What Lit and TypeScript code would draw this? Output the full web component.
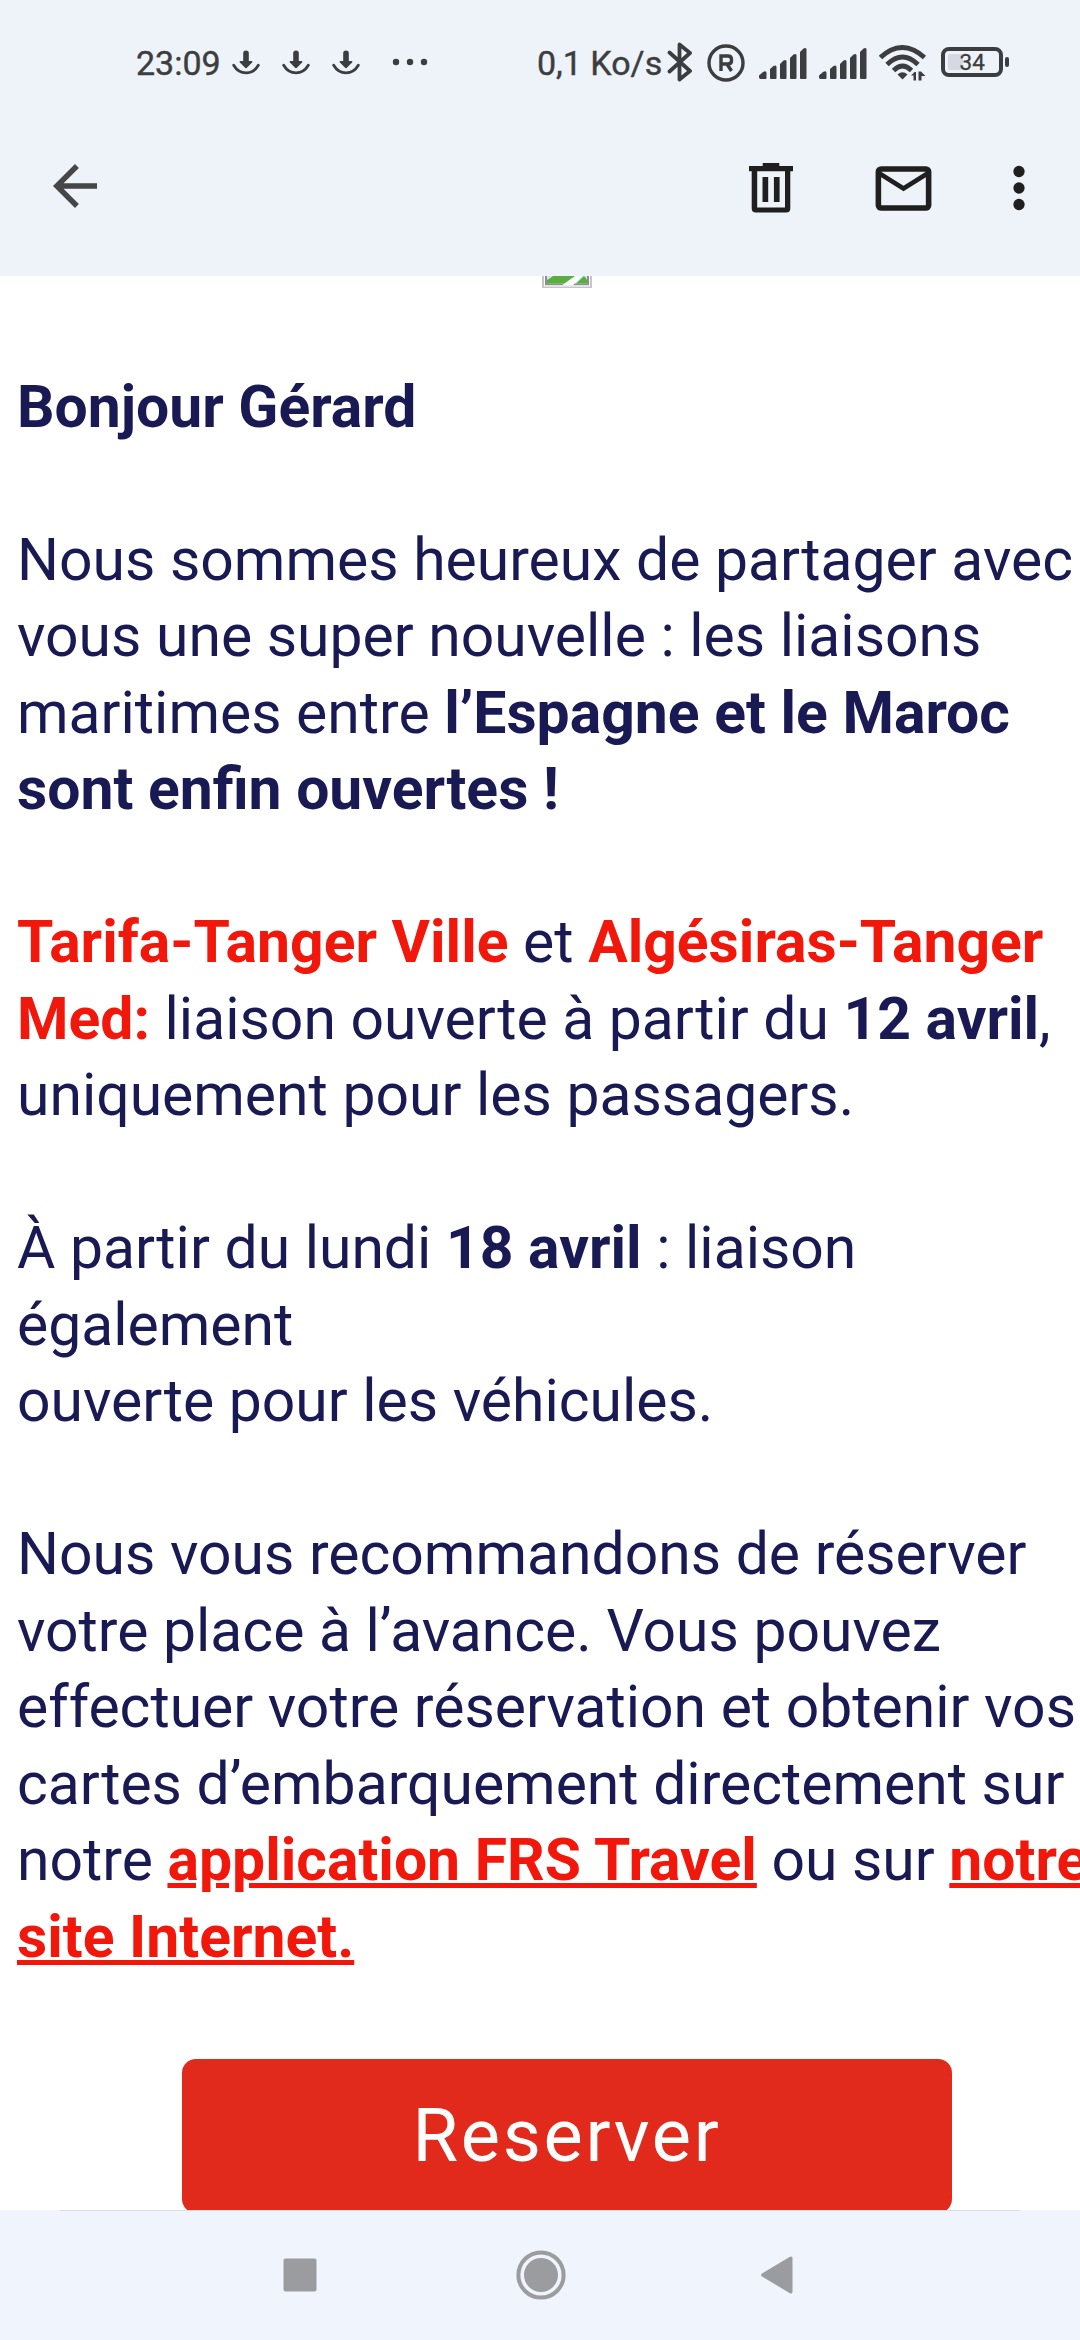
import { LitElement, html, css } from "lit";
import { customElement } from "lit/decorators.js";

const download = html`<svg class="dl" width="28" height="26" viewBox="0 0 28 26">
  <path d="M11.2 3.2a2.8 2.8 0 0 1 5.6 0V11h2.6c1 0 1.4.9.7 1.6l-5.200 5.100c-.6.600-1.200.600-1.800 0L7.900 12.600c-.7-.7-.3-1.600.7-1.600h2.600z" fill="#3c3d3f"/>
  <path d="M1.700 15.300C5 21 8.500 22.900 14 22.900S23 21 26.300 15.300" fill="none" stroke="#3c3d3f" stroke-width="2.800" stroke-linecap="round"/>
</svg>`;

const signal = html`<svg class="signal" width="48" height="32" viewBox="0 0 48 32" fill="#3c3d3f">
  <path d="M0 28.500 4 25q3.500-2 3.500 1v5a1 1 0 0 1-1 1H1.500Q0 32 0 30z"/>
  <path d="M11 22l3.500-3q3-1.500 3 1v11a1 1 0 0 1-1 1H12a1 1 0 0 1-1-1z"/>
  <path d="M21 17l3.500-3.500q3-1.500 3 1V31a1 1 0 0 1-1 1H22a1 1 0 0 1-1-1z"/>
  <path d="M31 11l3.500-3.500q3-1.500 3 1V31a1 1 0 0 1-1 1H32a1 1 0 0 1-1-1z"/>
  <path d="M41 5l3.500-3.500q3-1.500 3 1V31a1 1 0 0 1-1 1H42a1 1 0 0 1-1-1z"/>
</svg>`;

@customElement("app-root")
export class AppRoot extends LitElement {
  static styles = css`
    :host {
      display: flex;
      flex-direction: column;
      width: 1080px;
      height: 2340px;
      overflow: hidden;
      background: #fff;
      font-family: Roboto, "Liberation Sans", sans-serif;
    }
    svg { display: block; flex: none; }
    .status {
      display: flex;
      align-items: center;
      height: 126px;
      padding-left: 136px;
      box-sizing: border-box;
      background: #eef3fa;
      color: #3c3d3f;
      font-size: 34px;
      flex: none;
    }
    .time, .rate { white-space: nowrap; -webkit-text-stroke: 0.4px #3c3d3f; }
    .time { width: 96px; }
    .downloads { display: flex; gap: 22px; }
    .dots { margin: 0 0 2px 32px; }
    .rate { margin-left: 109px; width: 123px; }
    .bt { margin: 0 0 2px 7px; }
    .reg { margin: 0 0 1px 14px; }
    .sim { display: flex; gap: 12px; margin: 0 0 1px 14px; }
    .wifi { margin-left: 12px; }
    .battery { margin: 0 0 2px 14px; }
    .bar {
      display: flex;
      align-items: center;
      height: 150px;
      padding: 0 27px 26px 42px;
      box-sizing: border-box;
      background: #eef3fa;
      flex: none;
    }
    .back { margin-bottom: 4px; }
    .trash { margin: 0 0 2px 632px; }
    .mail { margin-left: 69.500px; }
    .more { margin-left: 49.500px; }
    .content {
      flex: 1;
      min-height: 0;
      overflow: hidden;
      display: flex;
      flex-direction: column;
    }
    .broken { margin-left: 542px; }
    .letter {
      padding: 81px 0 0 17px;
      color: #191953;
      font-size: 58.830px;
      line-height: 76.480px;
      white-space: nowrap;
    }
    p { margin: 0 0 76.480px; }
    b { font-weight: 700; }
    .red { color: #f1170b; }
    a {
      color: #f1170b;
      font-weight: 700;
      text-decoration: underline;
    }
    .cta {
      flex: none;
      align-self: flex-start;
      margin-left: 182px;
      margin-top: 7.400px;
      width: 770px;
      height: 154px;
      border-radius: 14px;
      background: #e12a1b;
      color: #fff;
      display: flex;
      align-items: center;
      justify-content: center;
      font-size: 74px;
      letter-spacing: 2.650px;
    }
    .nav {
      flex: none;
      display: grid;
      grid-template-columns: 60px 61px 52px;
      justify-content: start;
      justify-items: center;
      align-items: center;
      column-gap: 180px;
      padding-left: 270px;
      height: 130px;
      background: #f0f4fc;
      position: relative;
    }
    .rule {
      position: absolute;
      left: 60px;
      right: 60px;
      top: 0;
      height: 1px;
      background: #d9dce2;
    }
  `;

  render() {
    return html`
      <header class="status">
        <span class="time">23:09</span>
        <div class="downloads">${download}${download}${download}</div>
        <svg class="dots" width="36" height="8" viewBox="0 0 36 8" fill="#3c3d3f">
          <circle cx="4" cy="4" r="3.200"/><circle cx="18" cy="4" r="3.200"/><circle cx="32" cy="4" r="3.200"/>
        </svg>
        <span class="rate">0,1 Ko/s</span>
        <svg class="bt" width="26" height="40" viewBox="0 0 26 40">
          <path d="M2.500 10.500 23 29 12.500 37.500V2.500L23 11 2.500 29.500" fill="none" stroke="#3c3d3f" stroke-width="3.800" stroke-linecap="round" stroke-linejoin="round"/>
        </svg>
        <svg class="reg" width="38" height="38" viewBox="0 0 38 38" fill="none" stroke="#3c3d3f">
          <circle cx="19" cy="19" r="17" stroke-width="3.400"/>
          <path d="M14 27V12h7q3.500 0 3.500 3.500v1q0 3.500-3.500 3.500h-7M20 20l4.500 7" stroke-width="3.400"/>
        </svg>
        <div class="sim">${signal}${signal}</div>
        <svg class="wifi" width="48" height="36" viewBox="0 0 48 36">
          <g fill="none" stroke="#3c3d3f" stroke-width="4.800">
            <path d="M1.500 12.500Q23 -7.500 45.500 12.500"/>
            <path d="M8 19.500Q23.500 4.500 39 19.500"/>
            <path d="M14.500 25.500Q23.500 16.500 32.500 25.500"/>
          </g>
          <path d="M18.500 29.500q5-4.500 10 0L23.500 34.500z" fill="#3c3d3f"/>
          <path d="M32 30.500 35.500 27h1.500v8.500h-2.500v-5zM39.500 26.500H42l4.500 4.500h-4v4.500h-3z" fill="#3c3d3f"/>
        </svg>
        <svg class="battery" width="70" height="32" viewBox="0 0 70 32">
          <rect x="2" y="3" width="58" height="26" rx="6" fill="none" stroke="#3c3d3f" stroke-width="4"/>
          <rect x="7" y="8" width="15" height="16" rx="2" fill="#d5d9e1"/>
          <rect x="64" y="11" width="4" height="10" rx="2" fill="#3c3d3f"/>
          <text x="31.200" y="24" text-anchor="middle" font-size="22.500" fill="#3c3d3f" stroke="#3c3d3f" stroke-width=".3">34</text>
        </svg>
      </header>
      <nav class="bar">
        <svg class="back" width="66" height="66" viewBox="0 0 24 24" fill="#464646">
          <path d="M20 11.020H7.830l5.590-5.590L12 4l-8 8 8 8 1.420-1.410L7.830 13H20z"/>
        </svg>
        <svg class="trash" width="60" height="60" viewBox="0 0 60 60">
          <g fill="#1f1f1f">
            <path d="M22.700 6h16.600v3H53v5.300H9V9h13.700z"/>
            <path fill-rule="evenodd" d="M11.700 12h38.600v39.500a4 4 0 0 1-4 4H15.700a4 4 0 0 1-4-4zM17.200 14v36.500h27.800V14z"/>
            <rect x="22.500" y="20" width="5.700" height="25"/>
            <rect x="33.900" y="20" width="5.700" height="25"/>
          </g>
        </svg>
        <svg class="mail" width="67" height="67" viewBox="0 0 24 24" fill="#1f1f1f">
          <path d="M20 4H4a2 2 0 0 0-2 2v12a2 2 0 0 0 2 2h16a2 2 0 0 0 2-2V6a2 2 0 0 0-2-2zm0 14H4V8l8 5 8-5zm-8-7L4 6h16z"/>
        </svg>
        <svg class="more" width="66" height="66" viewBox="0 0 24 24" fill="#1f1f1f">
          <circle cx="12" cy="6" r="2.050"/><circle cx="12" cy="12" r="2.050"/><circle cx="12" cy="18" r="2.050"/>
        </svg>
      </nav>
      <main class="content">
        <svg class="broken" width="50" height="12" viewBox="0 0 50 12">
          <path d="M0 0h50v12H0z" fill="#c6c6c6"/>
          <path d="M2 0h46v10.500H2z" fill="#fff"/>
          <path d="M3 0h44v9.200H3z" fill="#8e8e8e"/>
          <path d="M5 0h40v7.500H5z" fill="#d3e6f7"/>
          <path d="M5 7.500V4Q8 2.500 11 0h24l-11 7.500z" fill="#5aad3f"/>
          <path d="M34 7.500 42 0q2 2 3 4v3.500z" fill="#5aad3f"/>
          <path d="M20 9.200 33 0h7l-9 9.200z" fill="#fff"/>
        </svg>
        <article class="letter">
          <p><b>Bonjour Gérard</b></p>
          <p>Nous sommes heureux de partager avec<br>vous une super nouvelle : les liaisons<br>maritimes entre <b>l’Espagne et le Maroc</b><br><b>sont enfin ouvertes !</b></p>
          <p><b class="red">Tarifa-Tanger Ville</b> et <b class="red">Algésiras-Tanger</b><br><b class="red">Med:</b> liaison ouverte à partir du <b>12 avril</b>,<br>uniquement pour les passagers.</p>
          <p>À partir du lundi <b>18 avril</b> : liaison<br>également<br>ouverte pour les véhicules.</p>
          <p>Nous vous recommandons de réserver<br>votre place à l’avance. Vous pouvez<br>effectuer votre réservation et obtenir vos<br>cartes d’embarquement directement sur<br>notre <a>application FRS Travel</a> ou sur <a>notre<br>site Internet.</a></p>
        </article>
        <div class="cta">Reserver</div>
      </main>
      <footer class="nav">
        <div class="rule"></div>
        <svg width="34" height="34" viewBox="0 0 34 34"><rect x=".5" y=".5" width="33" height="33" rx="2" fill="#9b9c9f"/></svg>
        <svg width="50" height="50" viewBox="0 0 50 50"><circle cx="25" cy="25" r="22.600" fill="none" stroke="#9b9c9f" stroke-width="4"/><circle cx="25" cy="25" r="17" fill="#9b9c9f"/></svg>
        <svg width="34" height="38" viewBox="0 0 34 38"><path d="M2 17.500 29.500 1q3-1.500 3 1.500v33q0 3-3 1.500L2 20.500q-2-1.500 0-3z" fill="#9b9c9f"/></svg>
      </footer>
    `;
  }
}
